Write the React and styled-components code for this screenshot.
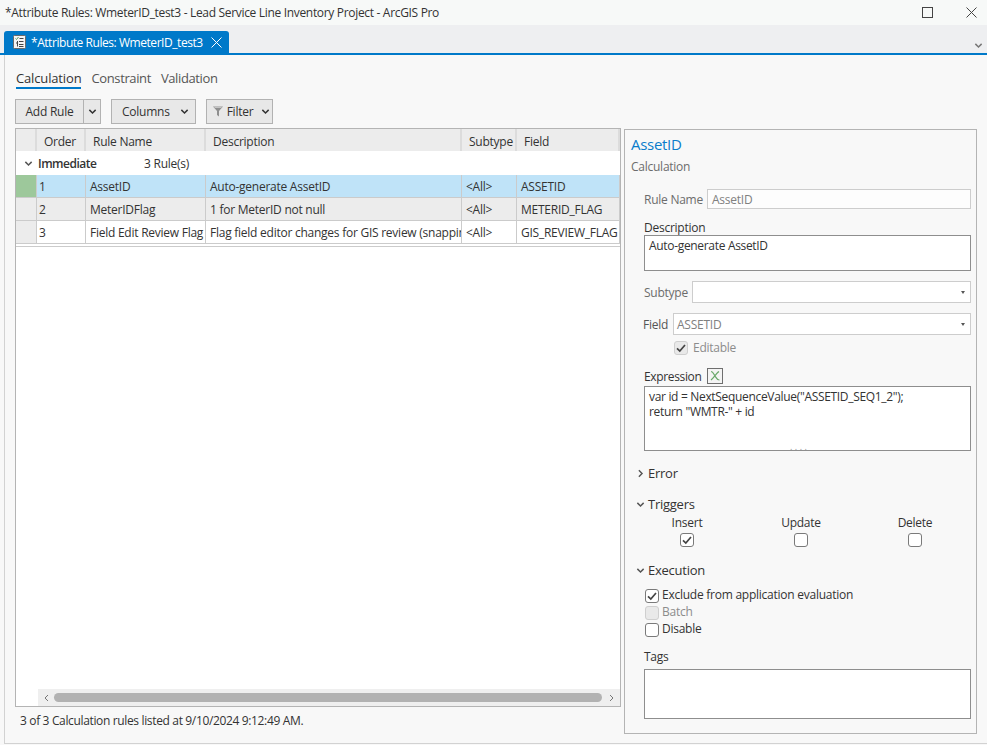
import React from 'react';
import styled, { createGlobalStyle } from 'styled-components';

const GlobalStyle = createGlobalStyle`
	html, body {
		margin: 0;
		padding: 0;
		background: #f8f8f8;
	}
	body {
		color: #333;
		font-family: "Open Sans", "Noto Sans", sans-serif;
		font-size: 12px;
		letter-spacing: -0.25px;
	}
	* {
		box-sizing: border-box;
	}
`;

const COLUMNS = '21px 49px 120px 256px 55px 103px';

const Window = styled.div`
	display: flex;
	flex-direction: column;
	height: 745px;
	overflow: hidden;
	width: 987px;
`;

const TitleBar = styled.div`
	align-items: center;
	background: #f7f9f8;
	display: flex;
	gap: 33px;
	height: 25px;
	padding: 0 10px 0 5px;
`;

const TitleText = styled.div`
	flex: 1;
	letter-spacing: -0.32px;
`;

const WindowButton = styled.div`
	display: flex;
	width: 11px;
`;

const TabStrip = styled.div`
	align-items: flex-end;
	background: #eeeff1;
	border-bottom: 2px solid #0079c9;
	display: flex;
	height: 30px;
	justify-content: space-between;
	padding-left: 4px;
`;

const DocTab = styled.div`
	align-items: center;
	background: #0079c9;
	border-radius: 3px 3px 0 0;
	color: #fff;
	display: flex;
	height: 22px;
	padding-left: 9px;
	width: 225px;
`;

const DocTabText = styled.span`
	flex: 1;
	letter-spacing: -0.45px;
	margin-left: 5px;
	white-space: nowrap;
`;

const DocTabClose = styled.span`
	display: flex;
	margin-right: 7px;
`;

const StripChevron = styled.div`
	display: flex;
	margin: 0 4px 3px 0;
`;

const Main = styled.div`
	background: #f8f8f8;
	border-bottom: 1px solid #d2d2d2;
	border-left: 1px solid #d2d2d2;
	display: flex;
	flex: 1;
	flex-direction: column;
	margin: 0 0 1px 4px;
	min-height: 0;
	padding: 15px 10px 0;
`;

const ModeTabs = styled.div`
	display: flex;
	gap: 10px;
	height: 19px;
	margin-left: 1px;
`;

const ModeTab = styled.div`
	border-bottom: ${props => (props.$active ? '2px solid #0079c9' : '2px solid transparent')};
	color: ${props => (props.$active ? '#333' : '#555')};
	font-size: 13px;
	letter-spacing: ${props => (props.$active ? '-0.15px' : '-0.38px')};
	line-height: 16px;
`;

const Toolbar = styled.div`
	display: flex;
	gap: 10px;
	height: 25px;
	margin-top: 10px;
`;

const ToolButton = styled.div`
	align-items: center;
	background: #e8e8e8;
	border: 1px solid #b2b2b2;
	display: flex;
	height: 25px;
	justify-content: space-between;
	padding: ${props => props.$padding};
	width: ${props => props.$width}px;
`;

const SplitLabel = styled.div`
	flex: 1;
	text-align: center;
`;

const SplitArrow = styled.div`
	align-items: center;
	border-left: 1px solid #b2b2b2;
	display: flex;
	height: 23px;
	justify-content: center;
	width: 17px;
`;

const FilterLabel = styled.span`
	margin-right: 4px;
`;

const Split = styled.div`
	display: flex;
	flex: 1;
	gap: 3px;
	margin-top: 4px;
	min-height: 0;
`;

const LeftColumn = styled.div`
	display: flex;
	flex-direction: column;
	height: 606px;
	width: 606px;
`;

const Grid = styled.div`
	background: #fff;
	border: 1px solid #b4b4b4;
	display: flex;
	flex-direction: column;
	height: 580px;
	width: 606px;
`;

const HeaderRow = styled.div`
	background: #ececec;
	display: grid;
	grid-template-columns: ${COLUMNS};
	height: 22px;
`;

const HeaderCell = styled.div`
	border-right: 2px solid #dcdcdc;
	line-height: 23px;
	overflow: hidden;
	padding: 1px 0 0 7px;
	white-space: nowrap;
`;

const GroupRow = styled.div`
	align-items: center;
	display: flex;
	height: 24px;
	padding-left: 8px;
`;

const GroupName = styled.span`
	font-weight: 600;
	letter-spacing: -0.5px;
	margin-left: 5px;
	width: 106px;
`;

const Row = styled.div`
	background: ${props => props.$bg};
	border-bottom: 1px solid #cbcbcb;
	display: grid;
	grid-template-columns: ${COLUMNS};
	height: 23px;
`;

const RowHeader = styled.div`
	background: ${props => (props.$selected ? '#9dc89b' : '#ececec')};
	border-right: 1px solid #cbcbcb;
`;

const Cell = styled.div`
	border-right: 1px solid #cbcbcb;
	line-height: 23px;
	overflow: hidden;
	padding-left: ${props => (props.$tight ? 2 : 4)}px;
	white-space: nowrap;
`;

const RowsEnd = styled.div`
	border-bottom: 1px solid #cbcbcb;
	height: 3px;
`;

const GridFill = styled.div`
	flex: 1;
`;

const Scrollbar = styled.div`
	align-items: center;
	background: #efefef;
	display: flex;
	height: 17px;
	justify-content: space-between;
	margin-left: 22px;
	padding: 0 6px;
`;

const ScrollThumb = styled.div`
	background: #b2b2b2;
	border-radius: 5px;
	flex: 1;
	height: 9px;
	margin: 0 7px 0 5px;
`;

const StatusBar = styled.div`
	letter-spacing: -0.35px;
	line-height: 26px;
	padding: 1px 0 0 5px;
`;

const Panel = styled.div`
	background: #f8f8f8;
	border: 1px solid #b4b4b4;
	height: 605px;
	margin-top: 1px;
	padding: 0 5px;
	width: 353px;
`;

const PanelTitle = styled.div`
	color: #0a7ccb;
	font-size: 15px;
	letter-spacing: -0.3px;
	line-height: 22px;
	margin: 3px 0 0 1px;
`;

const PanelSub = styled.div`
	color: #6c6c6c;
	line-height: 16px;
	margin: 4px 0 0 1px;
`;

const FormRow = styled.div`
	align-items: center;
	display: flex;
	height: ${props => props.$h}px;
	margin: ${props => props.$mt}px 0 0 14px;
`;

const RowLabel = styled.div`
	color: ${props => props.$color || '#6c6c6c'};
	margin-left: ${props => props.$ml || 0}px;
	padding-top: ${props => props.$pt || 0}px;
	width: ${props => props.$w}px;
`;

const TextInput = styled.div`
	background: #fdfdfd;
	border: 1px solid #cdcdcd;
	color: #808080;
	flex: 1;
	height: 100%;
	line-height: 19px;
	padding-left: 4px;
`;

const Select = styled(TextInput)`
	align-items: center;
	background: #fff;
	display: flex;
	justify-content: space-between;
	padding: 0 4px 0 3px;
`;

const Caret = styled.span`
	border-left: 2.5px solid transparent;
	border-right: 2.5px solid transparent;
	border-top: 3px solid #555;
	height: 0;
	margin-right: 1px;
	width: 0;
`;

const EditableRow = styled.div`
	align-items: center;
	display: flex;
	height: 14px;
	margin-left: 30px;
`;

const ExpressionLabel = styled.span`
	letter-spacing: -0.35px;
	width: 63px;
`;

const FieldLabel = styled.div`
	color: #333;
	line-height: 15px;
	margin: ${props => props.$mt}px 0 0 14px;
`;

const TextBox = styled.div`
	background: #fff;
	border: 1px solid #8e8e8e;
	height: ${props => props.$h}px;
	letter-spacing: -0.32px;
	line-height: 15px;
	margin: ${props => props.$mt || 0}px 0 0 14px;
	padding: 2px 4px;
	position: relative;
`;

const CodeLine = styled.div`
	height: 15px;
	white-space: nowrap;
`;

const ResizeDots = styled.div`
	bottom: 0;
	color: #999;
	font-size: 9px;
	left: 145px;
	letter-spacing: 2.5px;
	line-height: 7px;
	position: absolute;
`;

const Box = styled.div`
	align-items: center;
	background: ${props => (props.$disabled ? '#e9e9e9' : '#fff')};
	border: 1px solid ${props => (props.$disabled ? '#cfcfcf' : '#7a7a7a')};
	border-radius: 3px;
	display: flex;
	flex: none;
	height: 14px;
	justify-content: center;
	width: 14px;
`;

const CheckLabel = styled.div`
	color: ${props => (props.$disabled ? '#8c8c8c' : '#333')};
	margin: 0 0 ${props => props.$lift || 0}px ${props => props.$gap || 3}px;
`;

const SectionHead = styled.div`
	align-items: center;
	display: flex;
	font-size: 13px;
	gap: 3px;
	height: 16px;
	margin: ${props => props.$mt || 15}px 0 0 6px;
	padding-bottom: 2px;
`;

const TriggerGrid = styled.div`
	display: grid;
	grid-template-columns: repeat(3, 114px);
	margin-top: 3px;
`;

const Trigger = styled.div`
	align-items: center;
	display: flex;
	flex-direction: column;
	gap: 3px;
	line-height: 14px;
`;

const CheckList = styled.div`
	display: flex;
	flex-direction: column;
	gap: 3px;
	margin: 10px 0 0 15px;
`;

const CheckRow = styled.div`
	align-items: center;
	display: flex;
	height: 14px;
`;

const ChevronSvg = styled.svg`
	flex: none;
	transform: ${props => (props.$right ? 'rotate(-90deg)' : 'none')};
`;

const ExpressionSvg = styled.svg`
	flex: none;
`;

const Chevron = ({ right, color = '#555' }) => (
	<ChevronSvg $right={right} width='9' height='9' viewBox='0 0 10 10'>
		<path d='M1.5 3.2 L5 6.7 L8.5 3.2' fill='none' stroke={color} strokeWidth='1.6' />
	</ChevronSvg>
);

const Tick = () => (
	<svg width='10' height='10' viewBox='0 0 10 10'>
		<path d='M1 5.4 L3.8 8 L9 2' fill='none' stroke='#444' strokeWidth='1.7' />
	</svg>
);

const DocIcon = () => (
	<svg width='13' height='14' viewBox='0 0 13 14'>
		<rect x='0.5' y='0.5' width='12' height='13' rx='1' fill='#f4f4f4' stroke='#6a6a6a' />
		<path d='M2.5 3.5 L3.5 4.5 L5.5 2' fill='none' stroke='#5f9a5f' strokeWidth='1' />
		<path d='M6.5 3.5 H10.5 M6 6.5 H10.5 M6 9.5 H10.5 M6 11.5 H10.5 M4.5 6 V11.5 M3 8 H4.5' stroke='#444' strokeWidth='1' />
	</svg>
);

const FilterIcon = () => (
	<svg width='10' height='11' viewBox='0 0 10 11'>
		<path d='M0 0.5 H10 L6 5 V10.5 L4 9 V5 Z' fill='#8f8f8f' />
		<path d='M0.5 0.5 H9.5 L8 2 H2 Z' fill='#c4c4c4' />
	</svg>
);

const ExpressionIcon = () => (
	<ExpressionSvg width='16' height='16' viewBox='0 0 16 16'>
		<rect x='0.5' y='0.5' width='15' height='15' fill='#f4f4f4' stroke='#6f6f6f' />
		<path d='M4 3.5 C6 3.5 6.5 5.5 8 8 C9.5 10.5 10 12 12.5 12 M12 3.5 C9.5 5 6.5 10 4 12' fill='none' stroke='#69a86a' strokeWidth='1.2' />
	</ExpressionSvg>
);

const Check = ({ checked, disabled }) => (
	<Box $disabled={disabled}>{checked && <Tick />}</Box>
);

const CloseGlyph = ({ color }) => (
	<svg width='11' height='11' viewBox='0 0 11 11'>
		<path d='M0.5 0.5 L10.5 10.5 M10.5 0.5 L0.5 10.5' stroke={color} />
	</svg>
);

const rules = [
	{ order: 1, name: 'AssetID', description: 'Auto-generate AssetID', subtype: '<All>', field: 'ASSETID', bg: '#bfe3f8' },
	{ order: 2, name: 'MeterIDFlag', description: '1 for MeterID not null', subtype: '<All>', field: 'METERID_FLAG', bg: '#ececec' },
	{ order: 3, name: 'Field Edit Review Flag', description: 'Flag field editor changes for GIS review (snapping edits)', subtype: '<All>', field: 'GIS_REVIEW_FLAG', bg: '#fff' },
];

const RulesGrid = () => (
	<Grid>
		<HeaderRow>
			<HeaderCell />
			<HeaderCell>Order</HeaderCell>
			<HeaderCell>Rule Name</HeaderCell>
			<HeaderCell>Description</HeaderCell>
			<HeaderCell>Subtype</HeaderCell>
			<HeaderCell>Field</HeaderCell>
		</HeaderRow>
		<GroupRow>
			<Chevron />
			<GroupName>Immediate</GroupName>
			<span>3 Rule(s)</span>
		</GroupRow>
		{rules.map(rule => (
			<Row key={rule.order} $bg={rule.bg}>
				<RowHeader $selected={rule.order === 1} />
				<Cell $tight>{rule.order}</Cell>
				<Cell>{rule.name}</Cell>
				<Cell>{rule.description}</Cell>
				<Cell>{rule.subtype}</Cell>
				<Cell>{rule.field}</Cell>
			</Row>
		))}
		<RowsEnd />
		<GridFill />
		<Scrollbar>
			<svg width='5' height='8' viewBox='0 0 5 8'><path d='M4 1 L1 4 L4 7' fill='none' stroke='#777' /></svg>
			<ScrollThumb />
			<svg width='5' height='8' viewBox='0 0 5 8'><path d='M1 1 L4 4 L1 7' fill='none' stroke='#777' /></svg>
		</Scrollbar>
	</Grid>
);

const DetailsPanel = () => (
	<Panel>
		<PanelTitle>AssetID</PanelTitle>
		<PanelSub>Calculation</PanelSub>
		<FormRow $h={20} $mt={14}>
			<RowLabel $w={63} $pt={1}>Rule Name</RowLabel>
			<TextInput>AssetID</TextInput>
		</FormRow>
		<FieldLabel $mt={11}>Description</FieldLabel>
		<TextBox $h={36}>Auto-generate AssetID</TextBox>
		<FormRow $h={22} $mt={10}>
			<RowLabel $w={48}>Subtype</RowLabel>
			<Select><span /><Caret /></Select>
		</FormRow>
		<FormRow $h={22} $mt={10}>
			<RowLabel $w={30} $ml={-1} $color='#555'>Field</RowLabel>
			<Select>ASSETID<Caret /></Select>
		</FormRow>
		<FormRow $h={15} $mt={5}>
			<EditableRow>
				<Check disabled checked />
				<CheckLabel $disabled $gap={5}>Editable</CheckLabel>
			</EditableRow>
		</FormRow>
		<FormRow $h={16} $mt={13}>
			<ExpressionLabel>Expression</ExpressionLabel>
			<ExpressionIcon />
		</FormRow>
		<TextBox $h={65} $mt={2}>
			<CodeLine>var id = NextSequenceValue("ASSETID_SEQ1_2");</CodeLine>
			<CodeLine>return "WMTR-" + id</CodeLine>
			<ResizeDots>....</ResizeDots>
		</TextBox>
		<SectionHead><Chevron right />Error</SectionHead>
		<SectionHead><Chevron />Triggers</SectionHead>
		<TriggerGrid>
			<Trigger>Insert<Check checked /></Trigger>
			<Trigger>Update<Check /></Trigger>
			<Trigger>Delete<Check /></Trigger>
		</TriggerGrid>
		<SectionHead $mt={16}><Chevron />Execution</SectionHead>
		<CheckList>
			<CheckRow><Check checked /><CheckLabel $lift={4}>Exclude from application evaluation</CheckLabel></CheckRow>
			<CheckRow><Check disabled /><CheckLabel $disabled $lift={4}>Batch</CheckLabel></CheckRow>
			<CheckRow><Check /><CheckLabel $lift={4}>Disable</CheckLabel></CheckRow>
		</CheckList>
		<FieldLabel $mt={12}>Tags</FieldLabel>
		<TextBox $h={50} $mt={5} />
	</Panel>
);

const App = () => (
	<Window>
		<GlobalStyle />
		<TitleBar>
			<TitleText>*Attribute Rules: WmeterID_test3 - Lead Service Line Inventory Project - ArcGIS Pro</TitleText>
			<WindowButton>
				<svg width='11' height='11' viewBox='0 0 11 11'><rect x='0.5' y='0.5' width='10' height='10' fill='none' stroke='#444' /></svg>
			</WindowButton>
			<WindowButton><CloseGlyph color='#444' /></WindowButton>
		</TitleBar>
		<TabStrip>
			<DocTab>
				<DocIcon />
				<DocTabText>*Attribute Rules: WmeterID_test3</DocTabText>
				<DocTabClose><CloseGlyph color='#fff' /></DocTabClose>
			</DocTab>
			<StripChevron><Chevron color='#777' /></StripChevron>
		</TabStrip>
		<Main>
			<ModeTabs>
				<ModeTab $active>Calculation</ModeTab>
				<ModeTab>Constraint</ModeTab>
				<ModeTab>Validation</ModeTab>
			</ModeTabs>
			<Toolbar>
				<ToolButton $width={86} $padding='0'>
					<SplitLabel>Add Rule</SplitLabel>
					<SplitArrow><Chevron color='#333' /></SplitArrow>
				</ToolButton>
				<ToolButton $width={85} $padding='0 6px 0 10px'>Columns<Chevron color='#333' /></ToolButton>
				<ToolButton $width={67} $padding='0 2px 0 6px'>
					<FilterIcon /><FilterLabel>Filter</FilterLabel><Chevron color='#333' />
				</ToolButton>
			</Toolbar>
			<Split>
				<LeftColumn>
					<RulesGrid />
					<StatusBar>3 of 3 Calculation rules listed at 9/10/2024 9:12:49 AM.</StatusBar>
				</LeftColumn>
				<DetailsPanel />
			</Split>
		</Main>
	</Window>
);

export default App;
